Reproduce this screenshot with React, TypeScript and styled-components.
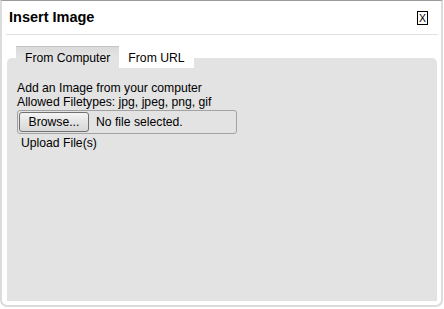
import React from "react";
import styled, { createGlobalStyle } from "styled-components";

const GlobalStyle = createGlobalStyle`
  html, body { margin: 0; padding: 0; background: #ffffff; }
  body { font-family: "Liberation Sans", Arial, sans-serif; font-size: 12.2px; color: #000; }
  * { box-sizing: border-box; }
`;

const Dialog = styled.div`
  width: 443px;
  height: 307px;
  background: #ffffff;
  border: 2px solid #dcdcdc;
  border-top: 1px solid #9a9a9a;
  border-radius: 0 0 7px 7px;
  padding: 0 3px 4px 4px;
  display: flex;
  flex-direction: column;
`;

const Header = styled.div`
  height: 34px;
  flex: none;
  display: flex;
  align-items: center;
  justify-content: space-between;
  padding: 0 10px 0 3px;
  border-bottom: 1px solid #e2e2e2;
`;

const Title = styled.h1`
  margin: 0;
  font-size: 14.5px;
  font-weight: bold;
  line-height: 17px;
  color: #000;
`;

const CloseButton = styled.button`
  width: 11px;
  height: 14px;
  padding: 0;
  margin: 1px 0 0 0;
  border: 1px solid #000;
  background: #fff;
  font-family: "Liberation Sans", Arial, sans-serif;
  font-size: 10.5px;
  line-height: 12px;
  color: #000;
  display: flex;
  align-items: center;
  justify-content: center;
`;

const TabBar = styled.div`
  display: flex;
  margin: 11px 0 -10px 10px;
  position: relative;
  z-index: 1;
`;

const Tab = styled.div<{ $active?: boolean }>`
  height: 22px;
  padding: 0 9px;
  display: flex;
  align-items: center;
  font-size: 12.2px;
  color: #000;
  background: ${(p) => (p.$active ? "linear-gradient(#dadada, #e3e3e3 45%)" : "#ffffff")};
  border-top: 1px solid ${(p) => (p.$active ? "#c4c4c4" : "#ffffff")};
`;

const Panel = styled.div`
  flex: 1;
  margin: 0 1px;
  background: #e3e3e3;
  border-radius: 5px 5px 0 0;
  padding: 24px 10px 0 10px;
`;

const Line = styled.div`
  font-size: 12.2px;
  line-height: 13.8px;
  color: #000;
`;

const FileBox = styled.div`
  width: 220px;
  height: 24px;
  margin-top: 0;
  border: 1px solid #a2a2a2;
  border-radius: 3px;
  padding: 1px;
  display: flex;
  align-items: center;
`;

const BrowseButton = styled.button`
  width: 70px;
  height: 20px;
  padding: 0;
  border: 1px solid #707070;
  border-radius: 3px;
  background: linear-gradient(#f4f4f4, #e4e4e4 50%, #d8d8d8);
  font-family: "Liberation Sans", Arial, sans-serif;
  font-size: 12.2px;
  color: #000;
`;

const FileName = styled.span`
  margin-left: 7px;
  font-size: 12.2px;
  color: #000;
`;

const UploadLink = styled.div`
  margin: 3px 0 0 4px;
  font-size: 12.2px;
  line-height: 13.8px;
  color: #000;
`;

export default function App() {
  return (
    <>
      <GlobalStyle />
      <Dialog>
        <Header>
          <Title>Insert Image</Title>
          <CloseButton>X</CloseButton>
        </Header>
        <TabBar>
          <Tab $active>From Computer</Tab>
          <Tab>From URL</Tab>
        </TabBar>
        <Panel>
          <Line>Add an Image from your computer</Line>
          <Line>Allowed Filetypes: jpg, jpeg, png, gif</Line>
          <FileBox>
            <BrowseButton>Browse...</BrowseButton>
            <FileName>No file selected.</FileName>
          </FileBox>
          <UploadLink>Upload File(s)</UploadLink>
        </Panel>
      </Dialog>
    </>
  );
}
